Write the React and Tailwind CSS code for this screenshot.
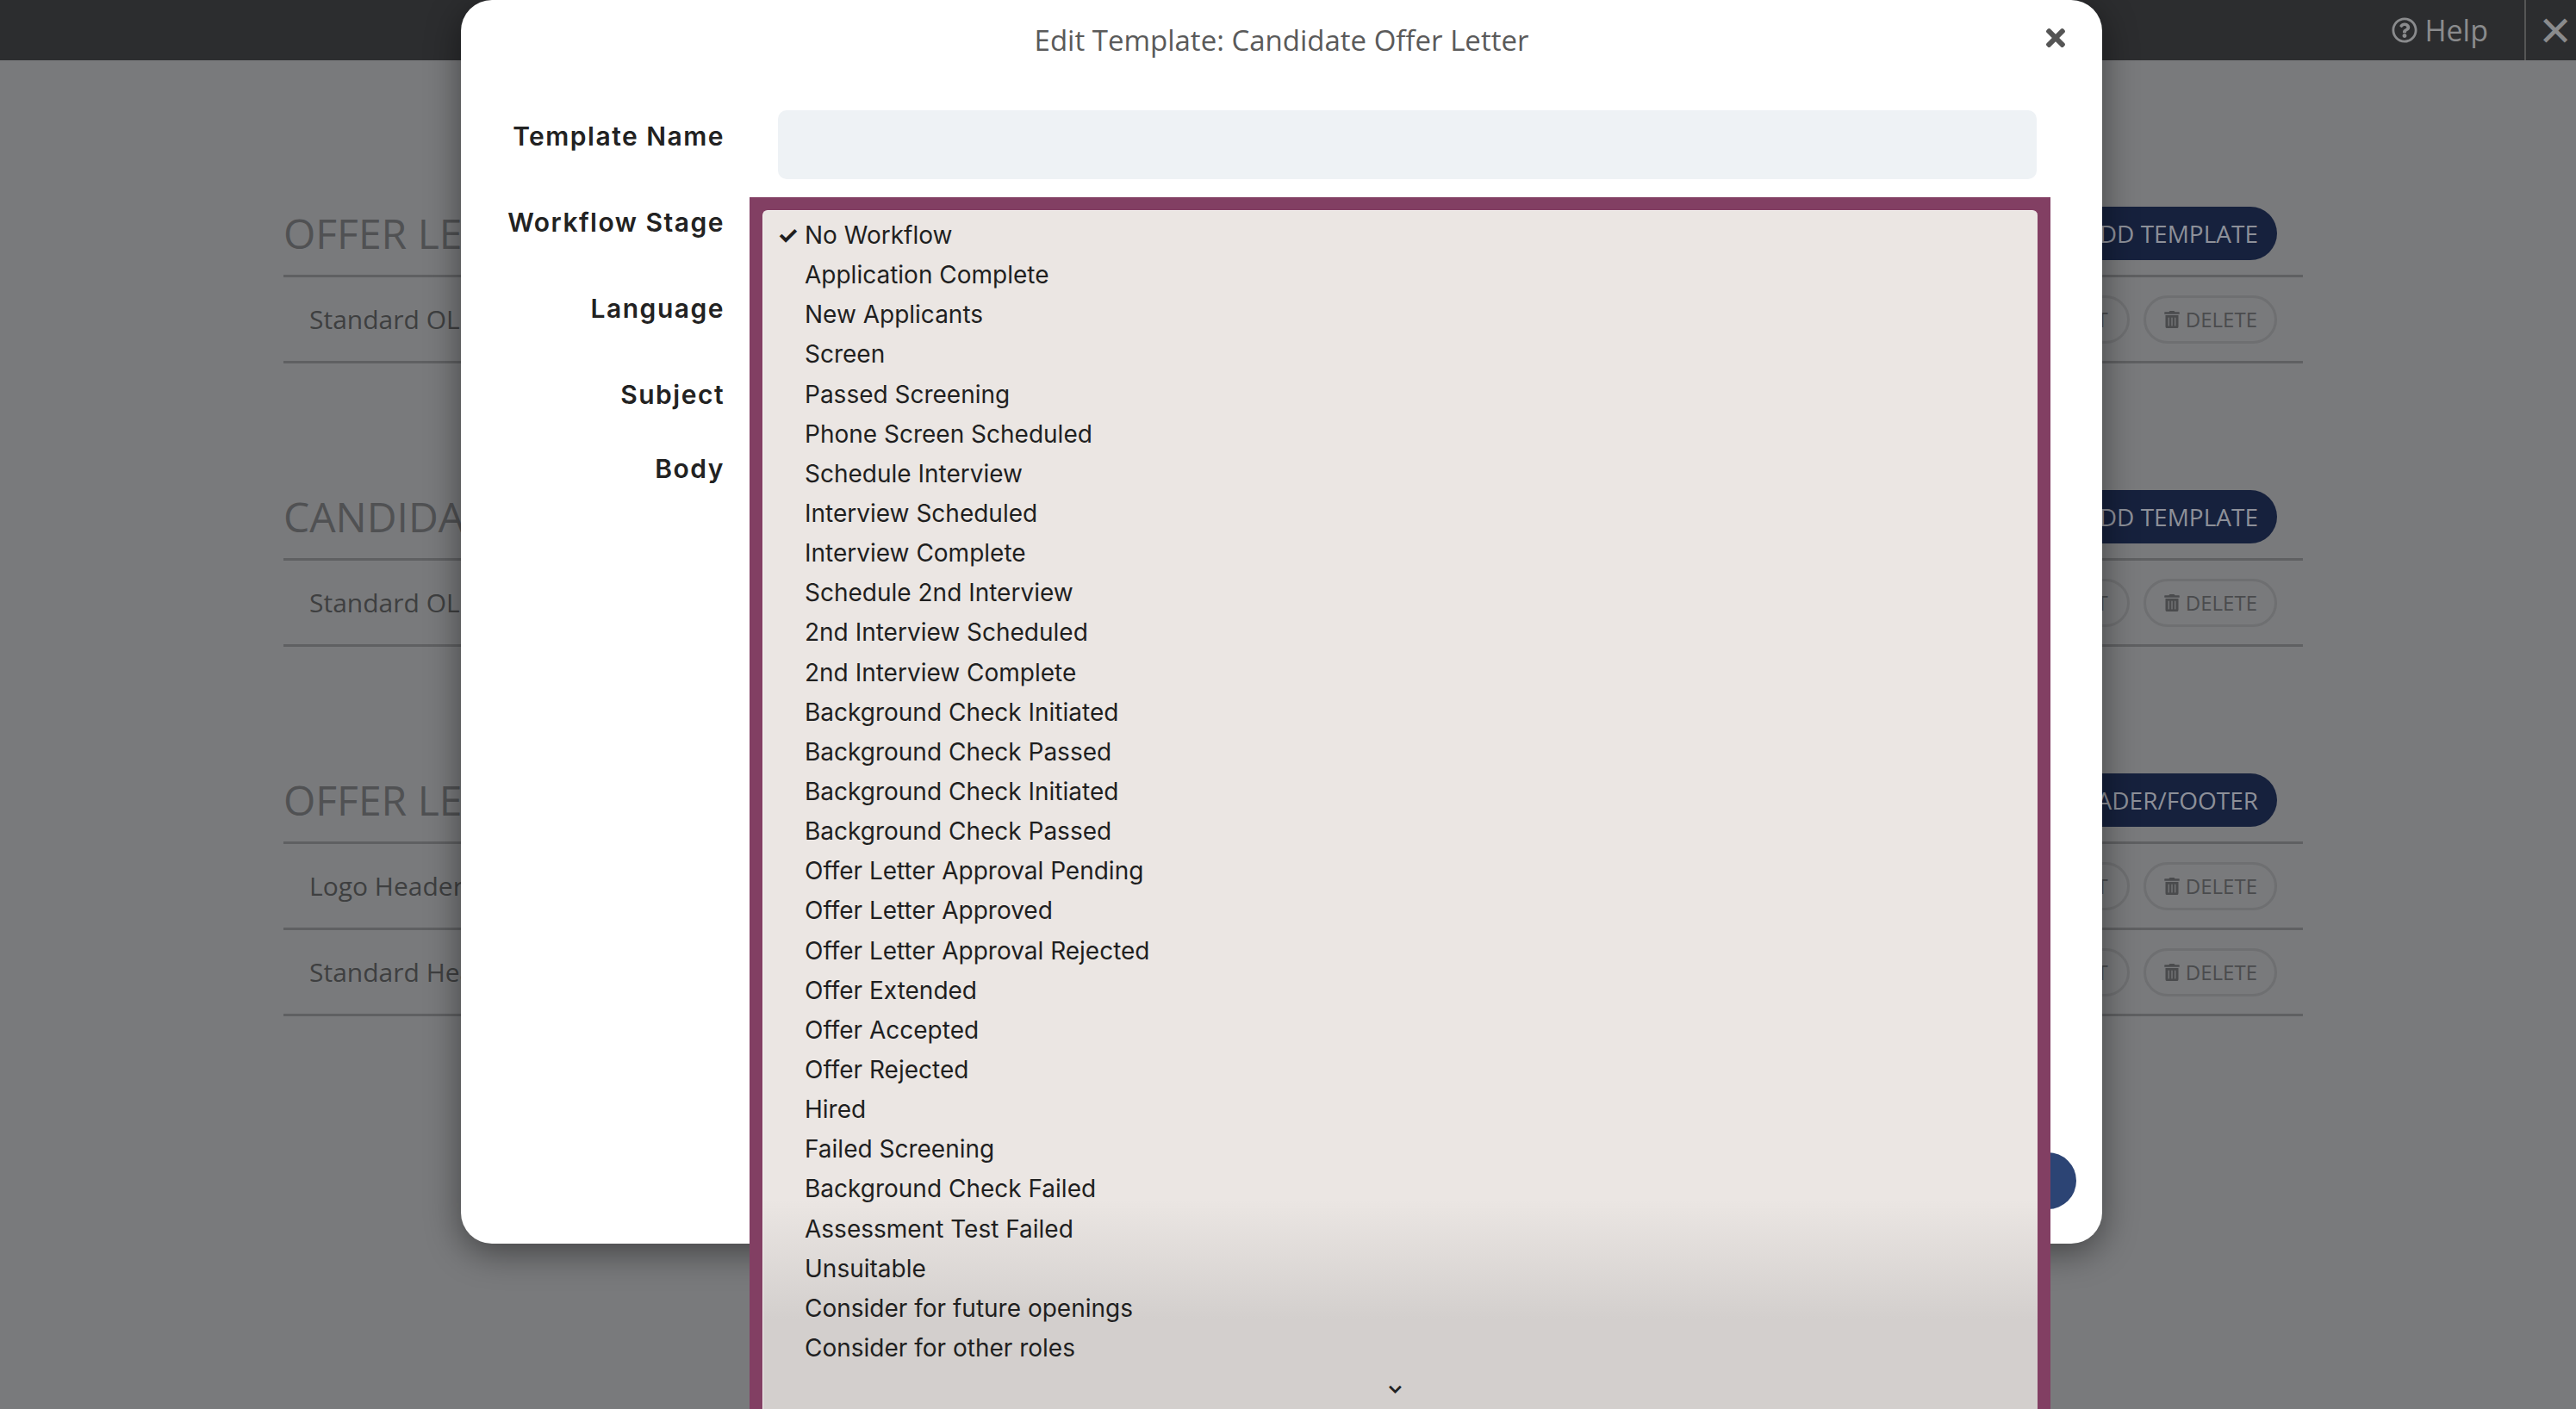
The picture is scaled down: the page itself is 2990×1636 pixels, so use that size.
import React from "react";
import { FaTimes, FaRegQuestionCircle, FaTrashAlt } from "react-icons/fa";

const stages = [
  "No Workflow",
  "Application Complete",
  "New Applicants",
  "Screen",
  "Passed Screening",
  "Phone Screen Scheduled",
  "Schedule Interview",
  "Interview Scheduled",
  "Interview Complete",
  "Schedule 2nd Interview",
  "2nd Interview Scheduled",
  "2nd Interview Complete",
  "Background Check Initiated",
  "Background Check Passed",
  "Background Check Initiated",
  "Background Check Passed",
  "Offer Letter Approval Pending",
  "Offer Letter Approved",
  "Offer Letter Approval Rejected",
  "Offer Extended",
  "Offer Accepted",
  "Offer Rejected",
  "Hired",
  "Failed Screening",
  "Background Check Failed",
  "Assessment Test Failed",
  "Unsuitable",
  "Consider for future openings",
  "Consider for other roles",
];

const sections = [
  { title: "OFFER LETTER TEMPLATES", button: "ADD TEMPLATE", rows: ["Standard OL Template"] },
  { title: "CANDIDATE OFFER LETTER", button: "ADD TEMPLATE", rows: ["Standard OL Email"] },
  { title: "OFFER LETTER HEADERS", button: "ADD HEADER/FOOTER", rows: ["Logo Header", "Standard Header"] },
];

const Row = ({ name }) => (
  <div className="flex h-[100px] items-center justify-between border-b-[3px] border-[#5f6062] pl-[30px] pr-[30px]">
    <span className="text-[30px] text-[#3e3f40]">{name}</span>
    <div className="flex gap-[16px]">
      <span className="flex h-[56px] items-center rounded-full border-[3px] border-[#6e6f71] px-[22px] text-[24px] text-[#4a4b4d]">EDIT</span>
      <span className="flex h-[56px] items-center gap-[6px] rounded-full border-[3px] border-[#6e6f71] px-[20px] text-[24px] text-[#4a4b4d]">
        <FaTrashAlt className="text-[20px]" /> DELETE
      </span>
    </div>
  </div>
);

const App = () => {
  return (
    <div className="relative h-[1636px] w-[2990px] overflow-hidden bg-[#797a7c]" style={{ fontFamily: "'Open Sans', sans-serif" }}>
      <div className="flex h-[70px] items-center justify-end bg-[#2c2d2f]">
        <div className="flex items-center gap-[8px] pr-[42px] text-[34px] text-[#8a8b8d]">
          <FaRegQuestionCircle className="text-[30px]" /> Help
        </div>
        <div className="flex h-full items-center border-l-2 border-[#555] pl-[14px] pr-[4px] text-[48px] font-light text-[#8a8b8d]">✕</div>
      </div>

      <div className="ml-[329px] w-[2344px] pt-[152px]">
        {sections.map((s, i) => (
          <div key={i} className="mb-[129px]">
            <div className="flex h-[100px] items-center justify-between border-b-[3px] border-[#5f6062] pr-[30px]">
              <span className="text-[48px] text-[#505153]">{s.title}</span>
              <span className="flex h-[62px] items-center rounded-full bg-[#16213d] px-[22px] text-[28px] text-[#8d9099]">{s.button}</span>
            </div>
            {s.rows.map((r) => (
              <Row key={r} name={r} />
            ))}
          </div>
        ))}
      </div>

      <div className="absolute left-[535px] top-0 h-[1444px] w-[1905px] rounded-[36px] bg-white shadow-[0_10px_40px_rgba(0,0,0,0.45)]">
        <div className="relative pt-[22px] text-center text-[33px] text-[#5a5a5a]">
          Edit Template: Candidate Offer Letter
          <FaTimes className="absolute right-[38px] top-[28px] text-[32px] text-[#555]" />
        </div>
        <div className="mt-[56px] grid grid-cols-[306px_1fr] gap-x-[62px] pr-[76px]" style={{ fontFamily: "Inter, sans-serif" }}>
          <div className="flex flex-col items-end gap-0 pt-[8px] text-[30px] font-semibold tracking-wider text-[#222]">
            <span className="h-[100px]">Template Name</span>
            <span className="h-[100px]">Workflow Stage</span>
            <span className="h-[100px]">Language</span>
            <span className="h-[86px]">Subject</span>
            <span>Body</span>
          </div>
          <div className="h-[80px] rounded-[10px] bg-[#eef2f5]" />
        </div>
        <div className="absolute bottom-[40px] right-[30px] h-[66px] w-[160px] rounded-full bg-[#2c4474]" />
      </div>

      <div className="absolute left-[870px] top-[229px] h-[1430px] w-[1510px] border-[15px] border-[#823f63] bg-[#823f63]" style={{ fontFamily: "Inter, sans-serif" }}>
        <div className="h-full rounded-t-[6px] border-l border-t border-[#f5f2f0] bg-[linear-gradient(180deg,#ebe6e3_0%,#ebe6e3_82%,#d3cfcd_92%,#d3cfcd_100%)] pl-[16px] pr-[8px] pt-[5px]">
          {stages.map((s, i) => (
            <div key={i} className="flex h-[46.15px] items-center text-[28px] text-[#1f1f1f]">
              <span className="w-[32px] text-[28px] font-bold">{i === 0 ? "✓" : ""}</span>
              <span>{s}</span>
            </div>
          ))}
          <div className="flex justify-center pr-[20px] pt-[4px] text-[24px] font-bold text-[#222]">⌄</div>
        </div>
      </div>
    </div>
  );
};

export default App;
